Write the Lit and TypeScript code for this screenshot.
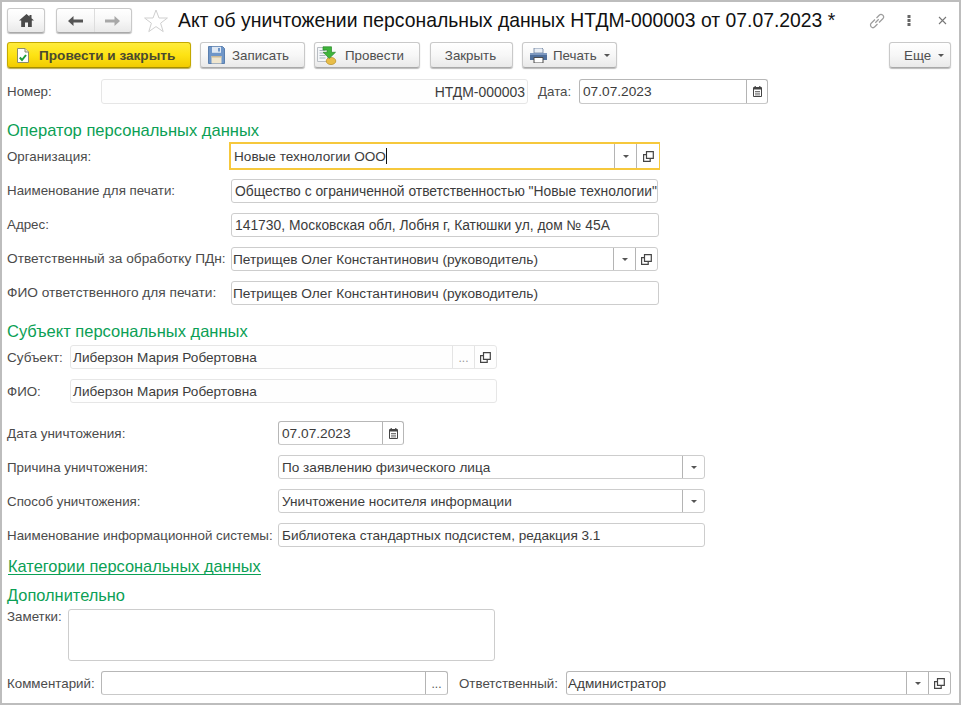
import { LitElement, html, css } from "lit";
import { customElement } from "lit/decorators.js";

const openIcon = html`<svg width="11" height="11" viewBox="0 0 11 11"><path d="M3.5.7h6.8v6.6H3.5z M3 3.6H.6v6.8h6.6V8" fill="none" stroke="#444" stroke-width="1.2"/></svg>`;
const dropIcon = html`<svg width="6" height="3" viewBox="0 0 6 3"><path d="M0 0h6L3 3z" fill="#555"/></svg>`;
const calIcon = html`<svg width="9" height="11" viewBox="0 0 9 11"><path d="M.5 1.5h8v9h-8z" fill="#fff" stroke="#444"/><path d="M2.2 0v3M6.8 0v3" stroke="#444" stroke-width="1.2"/><path d="M.5 2h8v1.6h-8z" fill="#444"/><path d="M2 5.5h5M2 7.2h5M2 8.9h5" stroke="#666" stroke-width=".9"/></svg>`;

@customElement("app-root")
export class AppRoot extends LitElement {
  static styles = css`
    :host { display: block; width: 961px; height: 705px; box-sizing: border-box; border: 2px solid #bdbdbd; background: #fff; font: 13.33px "Liberation Sans", Arial, sans-serif; color: #4b4b4b; overflow: hidden; }
    .page { padding: 6px 8px 0 5px; }
    .row { display: flex; align-items: center; height: 24px; margin-top: 10px; }
    .up .lab, .up .v { padding-bottom: 2px; }
    .top { display: flex; align-items: center; height: 25px; }
    .tools { display: flex; align-items: center; height: 26px; margin-top: 9px; }
    .btn { box-sizing: border-box; height: 100%; display: flex; align-items: center; justify-content: center; border: 1px solid #c9c9c9; border-bottom-color: #a9a9a9; border-radius: 3px; background: linear-gradient(#fff, #f7f7f7 50%, #e9e9e9); box-shadow: 0 1px 1px #bbb; color: #4f4f4f; white-space: nowrap; flex: none; }
    .b-home { width: 38px; }
    .b-nav { width: 76px; margin-left: 11px; padding: 0; }
    .b-nav span { flex: 1; height: 100%; display: flex; align-items: center; justify-content: center; }
    .b-nav span + span { border-left: 1px solid #ddd; }
    .star { margin: 0 10px 0 12px; flex: none; }
    .title { font-size: 19.35px; color: #111; white-space: nowrap; flex: 1; }
    .topic { display: flex; align-items: center; }
    .t-link { margin-right: 22px; }
    .t-dots { margin-right: 27px; }
    .t-x { margin-right: 4px; }
    .start { justify-content: flex-start; }
    .b-yellow { width: 184px; padding-left: 9px; gap: 10px; font-size: 13.6px; background: linear-gradient(#ffec3d, #fde314 50%, #f2cb00); border: 1px solid #c4a900; border-bottom-color: #a68f00; font-weight: bold; color: #4a4a30; box-shadow: 0 1px 1px #b9a94e; }
    .b-save { width: 105px; margin-left: 9px; padding-left: 7px; gap: 7px; }
    .b-post { width: 106px; margin-left: 9px; padding-left: 2px; gap: 7px; }
    .b-close { width: 83px; margin-left: 10px; padding-right: 2px; }
    .b-print { width: 95px; margin-left: 9px; padding-left: 7px; gap: 6px; }
    .b-print svg:last-child { margin-left: 1px; }
    .b-more { width: 62px; margin-left: auto; padding-left: 14px; gap: 7px; }
    .field { box-sizing: border-box; height: 24px; display: flex; align-items: center; border: 1px solid #cdcdcd; border-radius: 3px; background: #fff; color: #3c3c3c; overflow: hidden; flex: none; }
    .field .v { flex: 1; padding: 0 3px; white-space: nowrap; min-width: 0; }
    .field .s { flex: none; width: 22px; height: 100%; display: flex; align-items: center; justify-content: center; border-left: 1px solid #b4b4b4; box-sizing: border-box; }
    .field .s.cal { width: 21px; }
    .light { border-color: #e6e6e6; background: #fefefe; }
    .light .s { border-left-color: #e4e4e4; }
    .dark { border-color: #b7b7b7; border-bottom-color: #c9c9c9; }
    .num { height: 25px; width: 427px; text-align: right; font-size: 13.95px; }
    .num .v { padding-right: 2px; }
    .date1 { height: 25px; width: 189px; }
    .focus { height: 28px; width: 431px; margin-left: -2px; border: 2px solid #f6c83c; border-width: 2px 1px 2px 2px; border-radius: 0; }
    .focus .v { padding-left: 3px; }
    .focus .s { height: 24px; }
    .focus .s:last-child { width: 23px; }
    .lab { flex: none; white-space: nowrap; }
    .l94 { width: 94px; }
    .l222 { width: 224px; }
    .l63 { width: 63px; }
    .l271 { width: 271px; }
    .w427 { width: 427px; }
    .w428 { width: 428px; }
    .w126 { width: 126px; }
    .f139 { font-size: 13.85px; }
    .f137 { font-size: 13.7px; }
    .f136 { font-size: 13.6px; }
    .f135 { font-size: 13.5px; }
    .p2 .v { padding-left: 2px; }
    .p1 .v { padding-left: 1px; }
    .heading { height: 18px; line-height: 18px; font-size: 16.4px; color: #0ba055; }
    .h1 { margin-top: 18px; font-size: 16.55px; }
    .h2 { margin-top: 17px; font-size: 16.5px; }
    .link { display: block; width: max-content; height: 16px; line-height: 16px; margin: 11px 0 0 1px; font-size: 16.4px; color: #0ba055; border-bottom: 1px solid #0ba055; }
    .h3 { margin-top: 11px; }
    .dlabel { width: 41px; margin-left: 10px; }
    .notes { display: flex; margin-top: 5px; }
    .notes .lab { width: 61px; }
    .area { box-sizing: border-box; width: 427px; height: 52px; border: 1px solid #cdcdcd; border-radius: 3px; }
    .cmt { width: 347px; }
    .resp { width: 385px; }
    .rlab { margin-left: 11px; width: 107px; }
    .h25 { height: 25px; margin-top: 11px; }
    .f-top { margin-top: 2px; height: 28px; }
    .m9 { margin-top: 9px; }
    .s-top { margin-top: 5px; }
    .d-top { margin-top: 18px; }
    .dots { color: #555; font-size: 12px; position: relative; top: 1px; }
    .lgt { color: #999; }
    .caret { display: block; width: 1px; height: 16px; background: #111; }
    .cv { display: flex; align-items: center; }
  `;

  private field(value: unknown, cls: string, side: unknown = null) {
    return html`<div class="field ${cls}"><div class="v">${value}</div>${side}</div>`;
  }
  private s(icon: unknown, cls = "") {
    return html`<div class="s ${cls}">${icon}</div>`;
  }

  render() {
    return html`<div class="page">
      <div class="top">
        <div class="btn b-home"><svg width="15" height="13" viewBox="0 0 15 13"><path d="M7.5 0L0 6.5h2.2V13h3.8V8.5h3V13h3.8V6.5H15L12.5 4.2V1h-2v1.4z" fill="#4a4a4a"/></svg></div>
        <div class="btn b-nav">
          <span><svg width="15" height="10" viewBox="0 0 15 10"><path d="M5.5 0v3.6H15v2.8H5.5V10L0 5z" fill="#555"/></svg></span>
          <span><svg width="15" height="10" viewBox="0 0 15 10"><path d="M9.5 0v3.6H0v2.8h9.5V10L15 5z" fill="#a8a8a8"/></svg></span>
        </div>
        <svg class="star" width="24" height="24" viewBox="0 0 24 24"><path d="M12 1l3 8h8.4l-6.8 5.2 2.6 8.4L12 17.6l-7.2 5 2.6-8.4L.6 9H9z" fill="#fff" stroke="#cfcfcf"/></svg>
        <div class="title">Акт об уничтожении персональных данных НТДМ-000003 от 07.07.2023 *</div>
        <div class="topic">
          <svg class="t-link" width="16" height="16" viewBox="0 0 16 16"><g fill="none" stroke="#9d9d9d" stroke-width="1.25"><path d="M6 6.5L2.2 10.3a2.5 2.5 0 0 0 3.6 3.5L8.5 11"/><path d="M10 9.5l3.8-3.8a2.5 2.5 0 0 0-3.6-3.5L7.5 5"/><path d="M6.3 9.7l3.4-3.4"/></g></svg>
          <svg class="t-dots" width="4" height="11" viewBox="0 0 4 11"><path d="M.5 0h3v3h-3zM.5 4h3v3h-3zM.5 8h3v3h-3z" fill="#666"/></svg>
          <svg class="t-x" width="9" height="9" viewBox="0 0 9 9"><path d="M1 1l7 7M8 1L1 8" stroke="#777" stroke-width="1.1"/></svg>
        </div>
      </div>

      <div class="tools">
        <div class="btn b-yellow start">
          <svg width="12" height="15" viewBox="0 0 12 15"><path d="M.5.5h7.5l3.5 3.5v10.5H.5z" fill="#fff" stroke="#8c8c6a"/><path d="M8 .5V4h3.5" fill="#e8e8e0" stroke="#8c8c6a"/><path d="M2.8 9.5l2.2 2.5 4-5" fill="none" stroke="#1f9e3a" stroke-width="2"/></svg>
          Провести и закрыть
        </div>
        <div class="btn b-save start">
          <svg width="17" height="18" viewBox="0 0 17 18"><path d="M.5.5h14l2 2v15H.5z" fill="#6f96c8" stroke="#5a7fae"/><path d="M4 .8h9v6H4z" fill="#dfe8f3"/><path d="M10 2h2v3.5h-2z" fill="#6f96c8"/><path d="M3.5 10h10v7.5h-10z" fill="#f0e6cf"/><path d="M3.5 10h10v1.5h-10z" fill="#cdbb96"/></svg>
          Записать
        </div>
        <div class="btn b-post start">
          <svg width="21" height="19" viewBox="0 0 21 19"><path d="M.5 1.5h10v14H.5z" fill="#f4f6f8" stroke="#b9bec4"/><path d="M2.5 4.5h6M2.5 7h6M2.5 9.5h6M2.5 12h6" stroke="#a9b4c0"/><ellipse cx="14" cy="15" rx="4.8" ry="3.6" fill="#e8bd48" stroke="#b48b1e" stroke-width=".7"/><path d="M6 .8h8.5v5.5h4l-6.2 6-6.2-6h4V4H6z" fill="#3fb53c" stroke="#2c8a2a" stroke-width=".7"/></svg>
          Провести
        </div>
        <div class="btn b-close">Закрыть</div>
        <div class="btn b-print start">
          <svg width="17" height="15" viewBox="0 0 17 15"><path d="M4 0h8l1 1v4H4z" fill="#e9eef5" stroke="#6a7f9c" stroke-width=".8"/><path d="M0 5h17v7H0z" fill="#4f6f9c"/><path d="M0 5h17v2H0z" fill="#7d98bf"/><path d="M4 9.5h9V15H4z" fill="#fff" stroke="#4b4b4b"/></svg>
          Печать ${dropIcon}
        </div>
        <div class="btn b-more start">Еще ${dropIcon}</div>
      </div>

      <div class="row h25">
        <div class="lab l94">Номер:</div>
        ${this.field("НТДМ-000003", "num light")}
        <div class="lab dlabel">Дата:</div>
        ${this.field("07.07.2023", "date1 dark f137", this.s(calIcon, "cal"))}
      </div>

      <div class="heading h1">Оператор персональных данных</div>
      <div class="row f-top">
        <div class="lab l222">Организация:</div>
        ${this.field(html`<span class="cv">Новые технологии ООО<span class="caret"></span></span>`, "focus f136", html`${this.s(dropIcon)}${this.s(openIcon)}`)}
      </div>
      <div class="row m9 up">
        <div class="lab l222">Наименование для печати:</div>
        ${this.field('Общество с ограниченной ответственностью "Новые технологии"', "w427 f139")}
      </div>
      <div class="row up">
        <div class="lab l222">Адрес:</div>
        ${this.field("141730, Московская обл, Лобня г, Катюшки ул, дом № 45А", "w428 f139")}
      </div>
      <div class="row up">
        <div class="lab l222 f137">Ответственный за обработку ПДн:</div>
        ${this.field("Петрищев Олег Константинович (руководитель)", "w427 f137 p1", html`${this.s(dropIcon)}${this.s(openIcon)}`)}
      </div>
      <div class="row up">
        <div class="lab l222 f137">ФИО ответственного для печати:</div>
        ${this.field("Петрищев Олег Константинович (руководитель)", "w428 f137 p1")}
      </div>

      <div class="heading h2">Субъект персональных данных</div>
      <div class="row s-top">
        <div class="lab l63 f135">Субъект:</div>
        ${this.field("Либерзон Мария Робертовна", "w427 light f136 p2", html`${this.s(html`<span class="dots lgt">...</span>`)}${this.s(openIcon)}`)}
      </div>
      <div class="row">
        <div class="lab l63">ФИО:</div>
        ${this.field("Либерзон Мария Робертовна", "w427 light f136 p2")}
      </div>

      <div class="row d-top">
        <div class="lab l271 f135">Дата уничтожения:</div>
        ${this.field("07.07.2023", "w126 dark f137", this.s(calIcon, "cal"))}
      </div>
      <div class="row">
        <div class="lab l271">Причина уничтожения:</div>
        ${this.field("По заявлению физического лица", "w427 f136", this.s(dropIcon))}
      </div>
      <div class="row">
        <div class="lab l271">Способ уничтожения:</div>
        ${this.field("Уничтожение носителя информации", "w427 f136", this.s(dropIcon))}
      </div>
      <div class="row">
        <div class="lab l271">Наименование информационной системы:</div>
        ${this.field("Библиотека стандартных подсистем, редакция 3.1", "w427 f136")}
      </div>

      <a class="link">Категории персональных данных</a>
      <div class="heading h3">Дополнительно</div>
      <div class="notes">
        <div class="lab">Заметки:</div>
        <div class="area"></div>
      </div>
      <div class="row">
        <div class="lab l94">Комментарий:</div>
        ${this.field("", "cmt dark", this.s(html`<span class="dots">...</span>`))}
        <div class="lab rlab">Ответственный:</div>
        ${this.field("Администратор", "resp dark f136 p1", html`${this.s(dropIcon)}${this.s(openIcon)}`)}
      </div>
    </div>`;
  }
}
